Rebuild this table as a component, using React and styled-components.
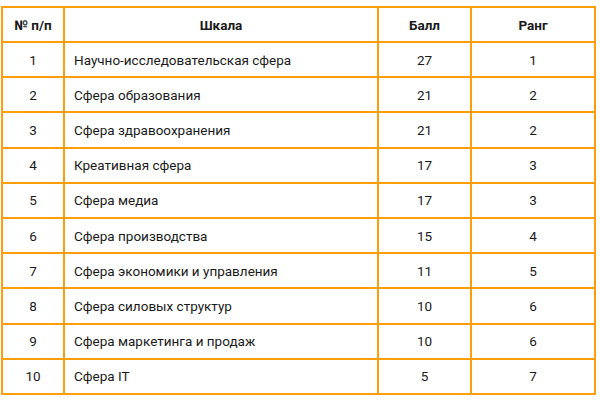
import React from 'react';
import styled, { createGlobalStyle } from 'styled-components';

const rows = [
    [1, 'Научно-исследовательская сфера', 27, 1],
    [2, 'Сфера образования', 21, 2],
    [3, 'Сфера здравоохранения', 21, 2],
    [4, 'Креативная сфера', 17, 3],
    [5, 'Сфера медиа', 17, 3],
    [6, 'Сфера производства', 15, 4],
    [7, 'Сфера экономики и управления', 11, 5],
    [8, 'Сфера силовых структур', 10, 6],
    [9, 'Сфера маркетинга и продаж', 10, 6],
    [10, 'Сфера IT', 5, 7],
];

const GlobalStyle = createGlobalStyle`
    body {
        margin: 0;
        background: #fff;
        font-family: Roboto, "Liberation Sans", sans-serif;
        color: #1a1a1a;
    }
`;

const Page = styled.div`
    padding: 6px 0 0 1px;
`;

const Table = styled.table`
    border-collapse: collapse;
    width: 593px;
    table-layout: fixed;
    font-size: 13.5px;
`;

const Col = styled.col`
    width: ${p => p.w}px;
`;

const Head = styled.th`
    border: 2px solid #ff9d0a;
    height: 33px;
    padding: 0;
    font-weight: 700;
    text-align: center;
`;

const Cell = styled.td`
    border: 2px solid #ff9d0a;
    height: 33.2px;
    padding: 0 0 0 ${p => (p.left ? 9 : 0)}px;
    text-align: ${p => (p.left ? 'left' : 'center')};
`;

const App = () => (
    <>
        <GlobalStyle />
        <Page>
            <Table>
                <colgroup>
                    <Col w={62} />
                    <Col w={314} />
                    <Col w={93} />
                    <Col w={124} />
                </colgroup>
                <thead>
                    <tr>
                        <Head>№ п/п</Head>
                        <Head>Шкала</Head>
                        <Head>Балл</Head>
                        <Head>Ранг</Head>
                    </tr>
                </thead>
                <tbody>
                    {rows.map(([n, name, score, rank]) => (
                        <tr key={n}>
                            <Cell>{n}</Cell>
                            <Cell left>{name}</Cell>
                            <Cell>{score}</Cell>
                            <Cell>{rank}</Cell>
                        </tr>
                    ))}
                </tbody>
            </Table>
        </Page>
    </>
);

export default App;
